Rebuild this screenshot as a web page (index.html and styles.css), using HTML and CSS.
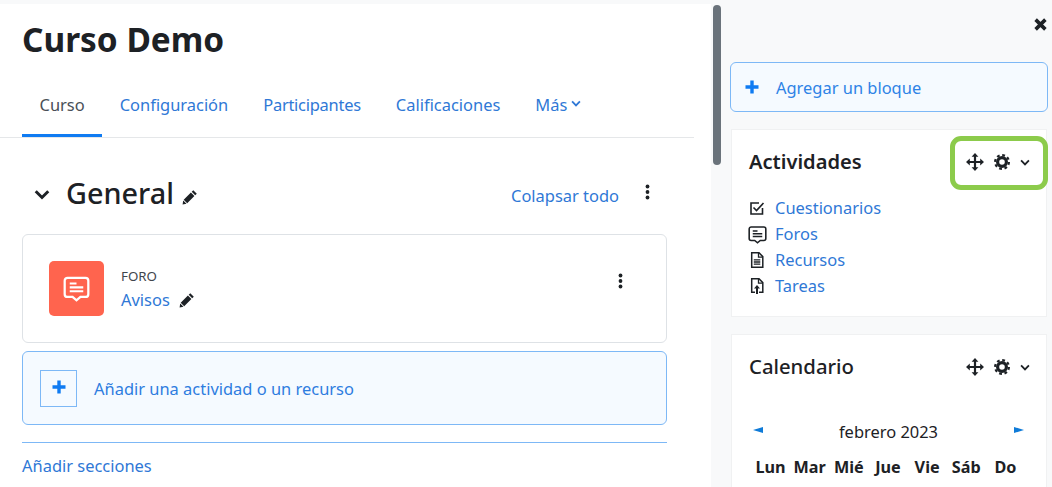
FILE: index.html
```html
<!DOCTYPE html>
<html lang="es">
<head>
<meta charset="utf-8">
<title>Curso Demo</title>
<link rel="stylesheet" href="styles.css">
</head>
<body>
<svg class="defs" width="0" height="0" aria-hidden="true">
  <symbol id="i-pencil" viewBox="0 0 16 16"><path d="M11.3 1.2 14.8 4.7 13.2 6.3 9.7 2.8ZM8.9 3.6 12.4 7.1 5.2 14.3 1.7 10.8ZM1.2 11.5 4.5 14.8 0.6 15.4Z" fill="currentColor"/></symbol>
  <symbol id="i-dots" viewBox="0 0 4 16"><circle cx="2" cy="2.5" r="1.9" fill="currentColor"/><circle cx="2" cy="8" r="1.9" fill="currentColor"/><circle cx="2" cy="13.5" r="1.9" fill="currentColor"/></symbol>
  <symbol id="i-plus" viewBox="0 0 14 14"><path d="M5.3 0.5h3.4v4.8h4.8v3.4H8.7v4.8H5.3V8.7H0.5V5.3h4.8Z" fill="currentColor"/></symbol>
  <symbol id="i-move" viewBox="0 0 18 18"><path d="M7.900 3h2.200v4.900H15v2.200H10.100V15H7.900V10.100H3V7.900h4.900Z" fill="currentColor"/><path d="M9 0 12.400 3.800H5.600ZM9 18 5.600 14.200H12.400ZM0 9 3.800 5.600V12.400ZM18 9 14.200 12.400V5.600Z" fill="currentColor"/></symbol>
  <symbol id="i-cog" viewBox="0 0 16 16"><circle cx="8" cy="8" r="4.4" fill="none" stroke="currentColor" stroke-width="3.2"/><circle cx="8" cy="8" r="6.9" fill="none" stroke="currentColor" stroke-width="2.2" stroke-dasharray="2.8 2.62"/></symbol>
  <symbol id="i-chev" viewBox="0 0 12 8"><path d="M1.3 1.5 6 6.200 10.700 1.500" fill="none" stroke="currentColor" stroke-width="2.200"/></symbol>
  <symbol id="i-forum" viewBox="0 0 24 24"><path d="M4 2.500h16a2.500 2.500 0 0 1 2.500 2.500v12a2.500 2.500 0 0 1-2.500 2.500h-4.500L12 22.500l-3.500-3H4A2.500 2.500 0 0 1 1.500 17V5A2.500 2.500 0 0 1 4 2.500Z" fill="none" stroke="currentColor" stroke-width="2"/><path d="M6 7.500h6M6 11h12M6 14.500h12" fill="none" stroke="currentColor" stroke-width="1.800"/></symbol>
</svg>

<main class="main">
  <h1 class="course-title">Curso Demo</h1>
  <nav class="tabs">
    <a class="tab active">Curso</a>
    <a class="tab">Configuración</a>
    <a class="tab tab-tight">Participantes</a>
    <a class="tab">Calificaciones</a>
    <a class="tab">Más <svg class="tab-chev"><use href="#i-chev"/></svg></a>
  </nav>
  <div class="content">
    <div class="section-head">
      <svg class="section-chev"><use href="#i-chev"/></svg>
      <h2 class="section-title">General</h2>
      <svg class="pencil section-pencil"><use href="#i-pencil"/></svg>
      <a class="link collapse-all">Colapsar todo</a>
      <svg class="dots"><use href="#i-dots"/></svg>
    </div>
    <article class="activity">
      <div class="activity-icon"><svg class="forum-white"><use href="#i-forum"/></svg></div>
      <div class="activity-text">
        <div class="activity-type">FORO</div>
        <div class="activity-name"><a class="link">Avisos</a><svg class="pencil"><use href="#i-pencil"/></svg></div>
      </div>
      <svg class="dots activity-dots"><use href="#i-dots"/></svg>
    </article>
    <a class="add-activity">
      <span class="add-square"><svg class="plus"><use href="#i-plus"/></svg></span>
      <span class="add-label">Añadir una actividad o un recurso</span>
    </a>
    <div class="add-sections"><a class="link">Añadir secciones</a></div>
  </div>
</main>
<div class="scrollbar"></div>

<aside class="drawer">
  <div class="drawer-close">
    <svg class="close-x" viewBox="0 0 12 12"><path d="M1.500 1.500 10.500 10.500M10.500 1.500 1.500 10.500" stroke="currentColor" stroke-width="3.300" fill="none"/></svg>
  </div>
  <a class="add-block"><svg class="plus"><use href="#i-plus"/></svg><span>Agregar un bloque</span></a>

  <section class="block block-activities">
    <header class="block-head">
      <h3 class="block-title strong">Actividades</h3>
      <div class="block-tools">
        <svg class="t-move"><use href="#i-move"/></svg>
        <svg class="t-cog"><use href="#i-cog"/></svg>
        <svg class="t-chev"><use href="#i-chev"/></svg>
      </div>
    </header>
    <ul class="activity-list">
      <li><svg class="li-icon" viewBox="0 0 16 16"><path d="M13.500 8v6H2V3h8" fill="none" stroke="currentColor" stroke-width="1.600"/><path d="M4.500 7.500 7.500 10.500 14.500 3" fill="none" stroke="currentColor" stroke-width="1.600"/></svg><a class="link">Cuestionarios</a></li>
      <li><svg class="li-icon li-forum"><use href="#i-forum"/></svg><a class="link">Foros</a></li>
      <li><svg class="li-icon" viewBox="0 0 16 16"><path d="M2.700 0.800H10L13.800 4.600V15.200H2.700Z" fill="none" stroke="currentColor" stroke-width="1.500"/><path d="M9.500 1V5.200H13.500M4.800 7.800h6.500M4.800 10h6.500M4.800 12.200h6.500" fill="none" stroke="currentColor" stroke-width="1.300"/></svg><a class="link">Recursos</a></li>
      <li><svg class="li-icon" viewBox="0 0 16 16"><path d="M6 14.300H2.700V0.800H10L13.800 4.600V14.300H10" fill="none" stroke="currentColor" stroke-width="1.500"/><path d="M9.500 1V5.200H13.500" fill="none" stroke="currentColor" stroke-width="1.300"/><path d="M8 7 11 10.500H9V16H7V10.500H5Z" fill="currentColor"/></svg><a class="link">Tareas</a></li>
    </ul>
  </section>

  <section class="block block-calendar">
    <header class="block-head">
      <h3 class="block-title">Calendario</h3>
      <div class="block-tools">
        <svg class="t-move"><use href="#i-move"/></svg>
        <svg class="t-cog"><use href="#i-cog"/></svg>
        <svg class="t-chev"><use href="#i-chev"/></svg>
      </div>
    </header>
    <div class="calendar">
      <div class="cal-month">
        <svg class="cal-arrow" viewBox="0 0 10 6"><path d="M0 3 10 0V6Z" fill="currentColor"/></svg>
        <span>febrero 2023</span>
        <svg class="cal-arrow" viewBox="0 0 10 6"><path d="M10 3 0 0V6Z" fill="currentColor"/></svg>
      </div>
      <div class="cal-days">
        <span>Lun</span><span>Mar</span><span>Mié</span><span>Jue</span><span>Vie</span><span>Sáb</span><span>Do</span>
      </div>
    </div>
  </section>
  <div class="highlight"></div>
</aside>
</body>
</html>
```
FILE: styles.css
```css
* { box-sizing: border-box; }
html, body { height: 487px; overflow: hidden; }
body {
  margin: 0;
  display: flex;
  position: relative;
  background: #f8f9fa;
  color: #1d2125;
  font-family: "Noto Sans", "Open Sans", sans-serif;
  font-size: 16.45px;
  line-height: 1.5;
}
.defs { position: absolute; }
a { text-decoration: none; }
.link { color: #2f78d6; }

.main {
  width: 711px;
  height: 483px;
  flex: none;
  margin-top: 4px;
  background: #fff;
  padding-right: 17px;
}
.course-title {
  margin: 0;
  padding: 12px 0 0 22px;
  height: 62px;
  font-size: 33.4px;
  line-height: 46px;
  font-weight: 700;
}
.tabs {
  display: flex;
  height: 72px;
  padding: 0 0 0 22px;
  border-bottom: 1px solid #e5e7e9;
}
.tab {
  display: flex;
  align-items: center;
  height: 71px;
  padding: 7px 17.5px 0;
  color: #2f78d6;
}
.tab.active { color: #495057; border-bottom: 3px solid #0f7bf2; padding-top: 10px; }
.tab-tight { letter-spacing: -0.25px; }
.tab-chev { width: 10px; height: 7px; margin: 0 0 3px 4px; }

.content { padding: 0 27px 0 22px; }
.section-head {
  display: flex;
  align-items: center;
  height: 56px;
  margin-top: 27px;
}
.section-chev { width: 16px; height: 11px; margin: 2px 0 0 12px; }
.section-title {
  margin: 0 0 0 16px;
  font-size: 28.8px;
  line-height: 40px;
  font-weight: 500;
}
.pencil { width: 16px; height: 16px; color: #1d2125; }
.section-pencil { margin: 8px 0 0 8px; }
.collapse-all { margin: 6px 0 0 auto; }
.dots { width: 5px; height: 16px; color: #1d2125; }
.section-head .dots { margin: -2px 17px 0 26px; }

.activity {
  display: flex;
  align-items: center;
  height: 109px;
  margin-top: 13px;
  padding: 0 43px 8px 26px;
  background: #fff;
  border: 1px solid #dee2e6;
  border-radius: 6px;
}
.activity-icon {
  width: 55px;
  height: 55px;
  display: flex;
  align-items: center;
  justify-content: center;
  margin-top: 8px;
  background: #ff644e;
  border-radius: 5px;
  color: #fff;
}
.forum-white { width: 27px; height: 27px; }
.activity-text { margin-left: 17px; flex: 1; padding-top: 6px; }
.activity-type { font-size: 13.3px; line-height: 20px; color: #3f464d; margin-top: 4px; }
.activity-name { display: flex; align-items: center; line-height: 28px; }
.activity-name .pencil { margin-left: 9px; }
.activity-dots { margin-top: -7px; }

.add-activity {
  display: flex;
  align-items: center;
  height: 74px;
  margin-top: 8px;
  padding: 0 17px;
  background: #f5faff;
  border: 1px solid #7db8f6;
  border-radius: 6px;
  color: #2e7ddf;
}
.add-square {
  width: 37px;
  height: 37px;
  display: flex;
  align-items: center;
  justify-content: center;
  border: 1px solid #7db8f6;
}
.plus { width: 14px; height: 14px; color: #0f7bf2; flex: none; }
.add-square .plus { margin-top: -2px; }
.add-label { margin: 2px 0 0 17px; }
.add-sections {
  margin-top: 17px;
  padding-top: 11px;
  border-top: 1px solid #7db8f6;
  line-height: 24px;
}

.scrollbar {
  position: absolute;
  left: 713px;
  top: 5px;
  width: 8px;
  height: 160px;
  border-radius: 4px;
  background: #6a737b;
}

.drawer {
  flex: 1;
  min-width: 0;
  height: 487px;
  overflow: hidden;
  position: relative;
  padding: 0 4px 0 19px;
}
.drawer-close { display: flex; justify-content: flex-end; height: 62px; padding: 18px 1.5px 0 0; }
.close-x { width: 13px; height: 13px; color: #1d2125; }
.add-block {
  display: flex;
  align-items: center;
  height: 50px;
  padding: 2px 0 0 14px;
  background: #f5faff;
  border: 1px solid #7db8f6;
  border-radius: 6px;
  color: #2e83e6;
}
.add-block .plus { margin-top: -2px; }
.add-block span { margin-left: 17px; }
.block {
  margin: 17px 1px 0;
  padding: 14px 18px 0 17px;
  height: 188px;
  background: #fff;
  border: 1px solid #f0f1f2;
}
.block-calendar { height: 153px; border-bottom: 0; }
.block-head { display: flex; align-items: center; justify-content: space-between; height: 36px; }
.block-title { margin: 0; font-size: 20.3px; line-height: 30px; font-weight: 500; }
.block-calendar .block-title { margin-top: -2px; }
.block-title.strong { font-weight: 600; font-size: 20.1px; }
.block-tools { display: flex; align-items: center; margin-right: -2px; }
.t-move { width: 18px; height: 18px; }
.t-cog { width: 16px; height: 16px; margin-left: 10px; }
.t-chev { width: 10px; height: 7px; margin-left: 10px; }
.activity-list { list-style: none; margin: 15px 0 0; padding: 0; }
.activity-list li { display: flex; align-items: center; height: 26px; }
.li-icon { width: 16px; height: 16px; flex: none; margin: 0 10px 0 0; }
.li-forum { width: 19px; height: 19px; margin: 0 8px 0 -1px; }

.calendar { padding: 34px 3px 0 2px; }
.cal-month { display: flex; align-items: center; justify-content: space-between; height: 26px; padding: 0 1px 0 2px; }
.cal-arrow { width: 10px; height: 6px; color: #0f7bd8; margin-top: -4px; }
.cal-days {
  display: grid;
  grid-template-columns: repeat(7, 1fr);
  margin-top: 10px;
  text-align: center;
  font-weight: 700;
  font-size: 16.2px;
  line-height: 24px;
}
.highlight {
  position: absolute;
  left: 239px;
  top: 136px;
  width: 98px;
  height: 54px;
  border: 5px solid #8ccb4b;
  border-radius: 11px;
}
```
